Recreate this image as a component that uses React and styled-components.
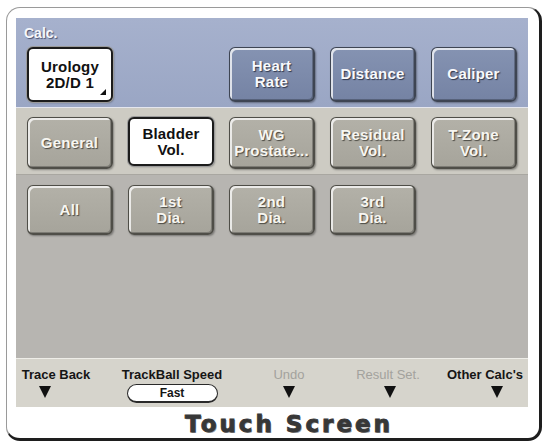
import React from 'react';
import styled, { createGlobalStyle } from 'styled-components';

const GlobalStyle = createGlobalStyle`
  body {
    margin: 0;
    background: #ffffff;
    font-family: "Liberation Sans", Arial, sans-serif;
  }
`;

const tones = {
  blue: {
    bg: 'linear-gradient(#8593b2, #7583a4)',
    color: '#f8f9fc',
    shadow: '1px 1px 1px #2f364a',
    border: '#3e4553',
  },
  grey: {
    bg: 'linear-gradient(#b3b1a8, #a6a49b)',
    color: '#f7f6f1',
    shadow: '1px 1px 1px #4a4943',
    border: '#4f4e48',
  },
  white: {
    bg: '#ffffff',
    color: '#111111',
    shadow: 'none',
    border: '#1c1c1c',
  },
};

const Frame = styled.div`
  box-sizing: border-box;
  width: 536px;
  height: 434px;
  margin: 7px 0 0 6px;
  padding: 10px 11px 0 9px;
  background: #ffffff;
  border: 1px solid #9a9a9a;
  border-right: 3px solid #1e1e1e;
  border-bottom: 3px solid #1e1e1e;
  border-radius: 14px;
  display: flex;
  flex-direction: column;
`;

const Screen = styled.div`
  width: 512px;
  display: flex;
  flex-direction: column;
`;

const Band = styled.div`
  box-sizing: border-box;
  height: ${p => p.$h}px;
  padding: ${p => p.$pad};
  background: ${p => p.$bg};
  border-bottom: 1px solid ${p => p.$edge || 'transparent'};
`;

const CalcLabel = styled.div`
  height: 15px;
  margin: 0 0 6px -3px;
  font-size: 14px;
  font-weight: bold;
  line-height: 15px;
  color: #f6f7fb;
  text-shadow: 1px 1px 1px #4a5472;
`;

const ButtonRow = styled.div`
  display: grid;
  grid-template-columns: repeat(5, 86px);
  column-gap: 15px;
`;

const Button = styled.div`
  position: relative;
  box-sizing: border-box;
  grid-column: ${p => p.$col || 'auto'};
  height: ${p => p.$h}px;
  display: flex;
  align-items: center;
  justify-content: center;
  text-align: center;
  font-size: 15px;
  font-weight: bold;
  line-height: 16px;
  letter-spacing: 0.2px;
  color: ${p => tones[p.$tone].color};
  text-shadow: ${p => tones[p.$tone].shadow};
  background: ${p => tones[p.$tone].bg};
  border: ${p => (p.$tone === 'white' ? 2 : 1)}px solid ${p => tones[p.$tone].border};
  border-bottom-width: 2px;
  border-right-width: 2px;
  border-radius: 6px;
  box-shadow: ${p =>
    p.$tone === 'white'
      ? '0 0 0 1px #9a9a9a, 1px 1px 2px rgba(0,0,0,.35)'
      : 'inset 2px 2px 0 rgba(255,255,255,.75), inset -1px -1px 0 rgba(0,0,0,.25), 1px 1px 2px rgba(0,0,0,.35)'};
`;

const Corner = styled.span`
  position: absolute;
  right: 5px;
  bottom: 5px;
  width: 0;
  height: 0;
  border-left: 6px solid transparent;
  border-bottom: 6px solid #111111;
`;

const BottomBar = styled.div`
  box-sizing: border-box;
  height: 49px;
  padding-top: 8px;
  background: #d6d4cc;
  border-top: 1px solid #eeede8;
  display: grid;
  grid-template-columns: 80px 152px 82px 116px 78px;
`;

const Control = styled.div`
  display: flex;
  flex-direction: column;
  align-items: center;
`;

const ControlLabel = styled.div`
  font-size: 13px;
  font-weight: ${p => (p.$muted ? 'normal' : 'bold')};
  line-height: 15px;
  white-space: nowrap;
  color: ${p => (p.$muted ? '#a3a29d' : '#151515')};
`;

const Arrow = styled.span`
  margin: 4px ${p => Math.max(0, -p.$dx * 2)}px 0 ${p => Math.max(0, p.$dx * 2)}px;
  width: 0;
  height: 0;
  border-left: 6px solid transparent;
  border-right: 6px solid transparent;
  border-top: 12px solid #111111;
`;

const Pill = styled.div`
  box-sizing: border-box;
  width: 91px;
  height: 19px;
  margin-top: 2px;
  border: 1px solid #2a2a2a;
  border-bottom-width: 2px;
  border-radius: 10px;
  background: #ffffff;
  font-size: 12px;
  font-weight: bold;
  line-height: 16px;
  text-align: center;
  color: #151515;
`;

const Title = styled.div`
  width: 512px;
  height: 31px;
  padding-left: 34px;
  box-sizing: border-box;
  text-align: center;
  font-family: "DejaVu Sans", sans-serif;
  font-weight: bold;
  font-size: 23px;
  line-height: 35px;
  letter-spacing: 3px;
  color: #373737;
  -webkit-text-stroke: 0.9px #373737;
  text-shadow: 1px 1px 0 #9c9c9c;
`;

const App = () => (
  <>
    <GlobalStyle />
    <Frame>
      <Screen>
        <Band $h={90} $pad="8px 0 6px 11px" $bg="linear-gradient(#a6b1cd, #9aa6c4)" $edge="#e4e6ee">
          <CalcLabel>Calc.</CalcLabel>
          <ButtonRow>
            <Button $tone="white" $h={55} $col={1}>
              Urology<br />2D/D 1
              <Corner />
            </Button>
            <Button $tone="blue" $h={55} $col={3}>Heart<br />Rate</Button>
            <Button $tone="blue" $h={55}>Distance</Button>
            <Button $tone="blue" $h={55}>Caliper</Button>
          </ButtonRow>
        </Band>
        <Band $h={67} $pad="9px 0 0 11px" $bg="#cdcbc3" $edge="#a9a7a1">
          <ButtonRow>
            <Button $tone="grey" $h={52}>General</Button>
            <Button $tone="white" $h={49}>Bladder<br />Vol.</Button>
            <Button $tone="grey" $h={52}>WG<br />Prostate...</Button>
            <Button $tone="grey" $h={52}>Residual<br />Vol.</Button>
            <Button $tone="grey" $h={52}>T-Zone<br />Vol.</Button>
          </ButtonRow>
        </Band>
        <Band $h={183} $pad="10px 0 0 11px" $bg="#b7b5b1">
          <ButtonRow>
            <Button $tone="grey" $h={50}>All</Button>
            <Button $tone="grey" $h={50}>1st<br />Dia.</Button>
            <Button $tone="grey" $h={50}>2nd<br />Dia.</Button>
            <Button $tone="grey" $h={50}>3rd<br />Dia.</Button>
          </ButtonRow>
        </Band>
        <BottomBar>
          <Control>
            <ControlLabel>Trace Back</ControlLabel>
            <Arrow $dx={-11} />
          </Control>
          <Control>
            <ControlLabel>TrackBall Speed</ControlLabel>
            <Pill>Fast</Pill>
          </Control>
          <Control>
            <ControlLabel $muted>Undo</ControlLabel>
            <Arrow $dx={0} />
          </Control>
          <Control>
            <ControlLabel $muted>Result Set.</ControlLabel>
            <Arrow $dx={2} />
          </Control>
          <Control>
            <ControlLabel>Other Calc's</ControlLabel>
            <Arrow $dx={12} />
          </Control>
        </BottomBar>
      </Screen>
      <Title>Touch Screen</Title>
    </Frame>
  </>
);

export default App;
